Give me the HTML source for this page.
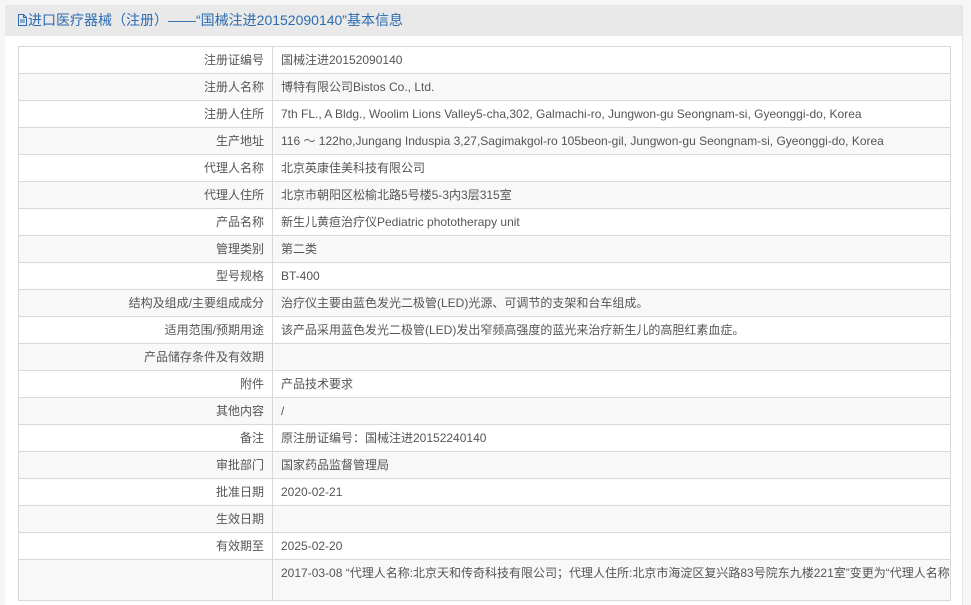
<!DOCTYPE html>
<html><head><meta charset="utf-8"><style>
body{margin:0;background:#f6f6f6;font-family:"Liberation Sans","Noto Sans CJK SC",sans-serif;width:971px;height:578px;overflow:hidden}
.panel{position:absolute;left:5px;top:5px;width:957px;height:600px;background:#fff;border-right:1px solid #e4e4e4}
.hd{height:31px;background:#e9e9e9;color:#2c6cb0;font-size:14px;line-height:31px;padding-left:12px}
table{position:absolute;left:13px;top:41px;width:933px;border-collapse:collapse;font-size:12px;color:#555;table-layout:fixed}
td{border:1px solid #d8d8d8;height:26px;padding:0 8px;line-height:26px;white-space:nowrap;overflow:hidden}
td.l{text-align:right}
tr:nth-child(even) td{background:#f8f8f8}
</style></head><body>
<div class="panel">
<div class="hd"><svg width="11" height="12" viewBox="0 0 11 12" style="vertical-align:-1px"><path d="M1.5 .5h5l3 3v8h-8z M6.5 .5v3h3 M3 6h5M3 8h5" fill="none" stroke="#2c6cb0"/></svg>进口医疗器械（注册）——“国械注进20152090140”基本信息</div>
<table>
<colgroup><col style="width:254px"><col></colgroup>
<tr><td class="l">注册证编号</td><td>国械注进20152090140</td></tr>
<tr><td class="l">注册人名称</td><td>博特有限公司Bistos Co., Ltd.</td></tr>
<tr><td class="l">注册人住所</td><td>7th FL., A Bldg., Woolim Lions Valley5-cha,302, Galmachi-ro, Jungwon-gu Seongnam-si, Gyeonggi-do, Korea</td></tr>
<tr><td class="l">生产地址</td><td>116 ～ 122ho,Jungang Induspia 3,27,Sagimakgol-ro 105beon-gil, Jungwon-gu Seongnam-si, Gyeonggi-do, Korea</td></tr>
<tr><td class="l">代理人名称</td><td>北京英康佳美科技有限公司</td></tr>
<tr><td class="l">代理人住所</td><td>北京市朝阳区松榆北路5号楼5-3内3层315室</td></tr>
<tr><td class="l">产品名称</td><td>新生儿黄疸治疗仪Pediatric phototherapy unit</td></tr>
<tr><td class="l">管理类别</td><td>第二类</td></tr>
<tr><td class="l">型号规格</td><td>BT-400</td></tr>
<tr><td class="l">结构及组成/主要组成成分</td><td>治疗仪主要由蓝色发光二极管(LED)光源、可调节的支架和台车组成。</td></tr>
<tr><td class="l">适用范围/预期用途</td><td>该产品采用蓝色发光二极管(LED)发出窄频高强度的蓝光来治疗新生儿的高胆红素血症。</td></tr>
<tr><td class="l">产品储存条件及有效期</td><td></td></tr>
<tr><td class="l">附件</td><td>产品技术要求</td></tr>
<tr><td class="l">其他内容</td><td>/</td></tr>
<tr><td class="l">备注</td><td>原注册证编号：国械注进20152240140</td></tr>
<tr><td class="l">审批部门</td><td>国家药品监督管理局</td></tr>
<tr><td class="l">批准日期</td><td>2020-02-21</td></tr>
<tr><td class="l">生效日期</td><td></td></tr>
<tr><td class="l">有效期至</td><td>2025-02-20</td></tr>
<tr><td class="l" style="height:40px"></td><td style="vertical-align:top">2017-03-08 “代理人名称:北京天和传奇科技有限公司；代理人住所:北京市海淀区复兴路83号院东九楼221室”变更为“代理人名称:</td></tr>
</table>
</div>
</body></html>
